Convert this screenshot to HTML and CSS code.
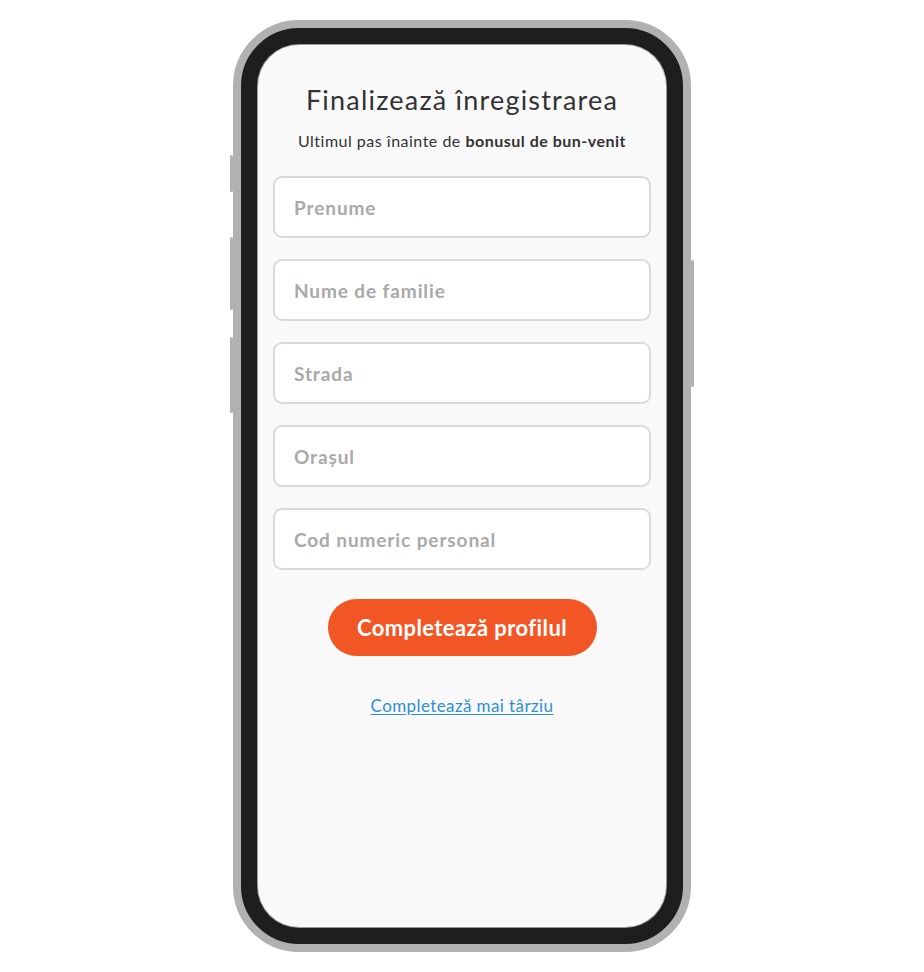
FILE: index.html
```html
<!DOCTYPE html>
<html lang="ro">
<head>
<meta charset="utf-8">
<title>Finalizează înregistrarea</title>
<link rel="stylesheet" href="styles.css">
</head>
<body>
<div class="page">
  <div class="phone">
    <span class="btn-side btn-l1"></span>
    <span class="btn-side btn-l2"></span>
    <span class="btn-side btn-l3"></span>
    <span class="btn-side btn-r1"></span>
    <div class="screen">
      <h1 class="title">Finalizează înregistrarea</h1>
      <p class="subtitle">Ultimul pas înainte de <b>bonusul de bun-venit</b></p>
      <form class="form">
        <input class="field" type="text" placeholder="Prenume">
        <input class="field" type="text" placeholder="Nume de familie">
        <input class="field" type="text" placeholder="Strada">
        <input class="field" type="text" placeholder="Orașul">
        <input class="field" type="text" placeholder="Cod numeric personal">
        <button class="submit" type="button">Completează profilul</button>
      </form>
      <a class="later" href="#">Completează mai târziu</a>
    </div>
  </div>
</div>
</body>
</html>
```
FILE: styles.css
```css
html, body {
  margin: 0;
  padding: 0;
  background: #ffffff;
}
body {
  font-family: Lato, "Noto Sans", sans-serif;
  color: #333333;
}
.page {
  display: flex;
  justify-content: center;
  padding-top: 20px;
}
.phone {
  position: relative;
  width: 458px;
  height: 932px;
  box-sizing: border-box;
  background: #1e1e20;
  border: 8px solid #b1b1b1;
  border-radius: 66px;
  padding: 17px;
}
.btn-side {
  position: absolute;
  width: 3px;
  background: #b1b1b1;
  border-radius: 2px;
}
.btn-l1 { left: -11px; top: 127px; height: 37px; }
.btn-l2 { left: -11px; top: 209px; height: 73px; }
.btn-l3 { left: -11px; top: 309px; height: 76px; }
.btn-r1 { right: -11px; top: 232px; height: 127px; }
.screen {
  height: 100%;
  box-sizing: border-box;
  background: #f9f9f9;
  border-radius: 41px;
  box-shadow: 0 0 0 1px #9a9a9a;
  padding: 0 15px;
  display: flex;
  flex-direction: column;
  align-items: center;
}
.title {
  margin: 38px 0 0;
  font-size: 27px;
  line-height: 34px;
  font-weight: 400;
  color: #333333;
  letter-spacing: 1.2px;
}
.subtitle {
  margin: 14px 0 0;
  font-size: 16px;
  line-height: 20px;
  color: #333333;
  letter-spacing: 0.5px;
}
.subtitle b {
  font-weight: 700;
}
.form {
  margin-top: 25px;
  width: 100%;
  display: flex;
  flex-direction: column;
  align-items: center;
  gap: 21px;
}
.field {
  width: 100%;
  height: 62px;
  box-sizing: border-box;
  border: 2px solid #dadada;
  border-radius: 9px;
  background: #ffffff;
  padding: 0 19px;
  font-family: Lato, "Noto Sans", sans-serif;
  font-size: 19px;
  font-weight: 700;
  letter-spacing: 0.9px;
  color: #333333;
  outline: none;
}
.field::placeholder {
  color: #a9a9a9;
  opacity: 1;
}
.submit {
  margin-top: 8px;
  width: 269px;
  height: 57px;
  border: none;
  border-radius: 29px;
  background: #f35625;
  color: #ffffff;
  font-family: Lato, "Noto Sans", sans-serif;
  font-size: 22px;
  font-weight: 700;
  letter-spacing: 0.4px;
  cursor: pointer;
}
.later {
  margin-top: 39px;
  font-size: 17px;
  line-height: 22px;
  color: #2e8fd8;
  letter-spacing: 0.4px;
  text-decoration: underline;
  text-underline-offset: 2px;
}
```
